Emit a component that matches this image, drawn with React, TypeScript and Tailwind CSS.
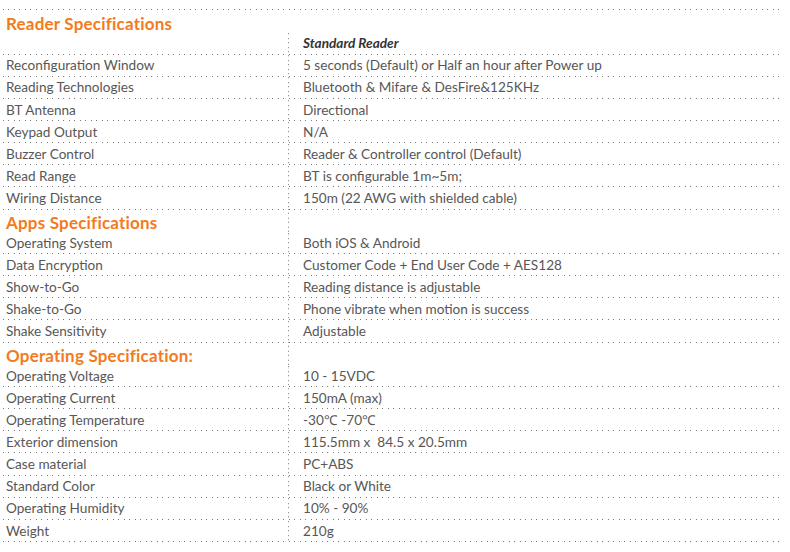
import React from 'react';

type Row =
    | { kind: 'head'; label: string; divider: boolean }
    | { kind: 'row'; label: string; value: string; italic?: boolean };

const rows: Row[] = [
    { kind: 'head', label: 'Reader Specifications', divider: false },
    { kind: 'row', label: '', value: 'Standard Reader', italic: true },
    { kind: 'row', label: 'Reconfiguration Window', value: '5 seconds (Default) or Half an hour after Power up' },
    { kind: 'row', label: 'Reading Technologies', value: 'Bluetooth & Mifare & DesFire&125KHz' },
    { kind: 'row', label: 'BT Antenna', value: 'Directional' },
    { kind: 'row', label: 'Keypad Output', value: 'N/A' },
    { kind: 'row', label: 'Buzzer Control', value: 'Reader & Controller control (Default)' },
    { kind: 'row', label: 'Read Range', value: 'BT is configurable 1m~5m;' },
    { kind: 'row', label: 'Wiring Distance', value: '150m (22 AWG with shielded cable)' },
    { kind: 'head', label: 'Apps Specifications', divider: true },
    { kind: 'row', label: 'Operating System', value: 'Both iOS & Android' },
    { kind: 'row', label: 'Data Encryption', value: 'Customer Code + End User Code + AES128' },
    { kind: 'row', label: 'Show-to-Go', value: 'Reading distance is adjustable' },
    { kind: 'row', label: 'Shake-to-Go', value: 'Phone vibrate when motion is success' },
    { kind: 'row', label: 'Shake Sensitivity', value: 'Adjustable' },
    { kind: 'head', label: 'Operating Specification:', divider: true },
    { kind: 'row', label: 'Operating Voltage', value: '10 - 15VDC' },
    { kind: 'row', label: 'Operating Current', value: '150mA (max)' },
    { kind: 'row', label: 'Operating Temperature', value: '-30\u2103 -70\u2103' },
    { kind: 'row', label: 'Exterior dimension', value: '115.5mm x  84.5 x 20.5mm' },
    { kind: 'row', label: 'Case material', value: 'PC+ABS' },
    { kind: 'row', label: 'Standard Color', value: 'Black or White' },
    { kind: 'row', label: 'Operating Humidity', value: '10% - 90%' },
    { kind: 'row', label: 'Weight', value: '210g' },
];

// dotted rules: 11px / 9px tiles hold two dots each, so the spacing stays on whole pixels
const hDots =
    'bg-[linear-gradient(to_right,#7a7a7a_1px,transparent_1px,transparent_5px,#7a7a7a_5px,#7a7a7a_6px,transparent_6px)] bg-[length:11px_1px] bg-repeat-x';
const vDots =
    'bg-[linear-gradient(to_bottom,#7a7a7a_1px,transparent_1px,transparent_4px,#7a7a7a_4px,#7a7a7a_5px,transparent_5px)] bg-[length:1px_9px] bg-repeat-y bg-left';

const App = () => {
    return (
        <div className="w-[790px] h-[552px] bg-white pt-[9px] pl-[3px] font-['Lato','Liberation_Sans',sans-serif]">
            <div className={`w-[779px] h-px ${hDots}`}></div>
            {rows.map((row, i) => (
                <div key={i} className="h-[22.17px] flex flex-col">
                    <div className="flex-1 flex">
                        {row.kind === 'head' ? (
                            <>
                                <div className="w-[285px] pl-[3px] pt-[1px] flex items-center text-[17px] font-bold text-[#f47a20] tracking-[0.2px]">
                                    {row.label}
                                </div>
                                <div className={`flex-1 ${row.divider ? vDots : ''}`}></div>
                            </>
                        ) : (
                            <>
                                <div className="w-[285px] pl-[3px] pt-[1px] flex items-center text-[13.6px] text-[#575757]">
                                    {row.label}
                                </div>
                                <div
                                    className={`flex-1 pl-[15px] pt-[1px] flex items-center whitespace-pre text-[13.6px] ${vDots} ${
                                        row.italic ? 'italic font-bold text-[#333]' : 'text-[#575757]'
                                    }`}
                                >
                                    {row.value}
                                </div>
                            </>
                        )}
                    </div>
                    <div className={`w-[779px] h-px ${hDots}`}></div>
                </div>
            ))}
        </div>
    );
};

export default App;
